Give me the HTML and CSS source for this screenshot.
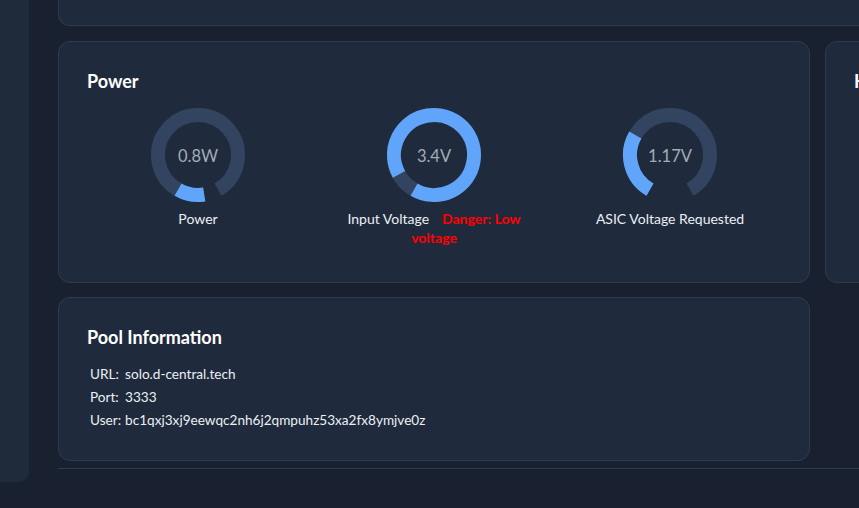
FILE: index.html
```html
<!DOCTYPE html>
<html lang="en">
<head>
<meta charset="utf-8">
<title>AxeOS Dashboard</title>
<link rel="stylesheet" href="styles.css">
</head>
<body>
<div class="app">
  <aside class="sidebar"></aside>
  <main class="main">
    <div class="card top-card"></div>
    <div class="row">
      <section class="card power-card">
        <h2 class="card-title">Power</h2>
        <div class="gauges">
          <div class="gauge">
            <svg class="knob" viewBox="0 0 100 100" width="100" height="100">
              <path class="knob-range" d="M 30 84.64 A 40 40 0 1 1 70 84.64"/>
              <path class="knob-value" d="M 56.26 89.51 A 40 40 0 0 1 30 84.64"/>
              <text class="knob-text" x="50" y="57" text-anchor="middle">0.8W</text>
            </svg>
            <div class="gauge-label">Power</div>
          </div>
          <div class="gauge">
            <svg class="knob" viewBox="0 0 100 100" width="100" height="100">
              <path class="knob-range" d="M 30 84.64 A 40 40 0 1 1 70 84.64"/>
              <path class="knob-value" d="M 15.01 69.39 A 40 40 0 1 1 30 84.64"/>
              <text class="knob-text" x="50" y="57" text-anchor="middle">3.4V</text>
            </svg>
            <div class="gauge-label">Input Voltage<span class="danger">Danger: Low voltage</span></div>
          </div>
          <div class="gauge">
            <svg class="knob" viewBox="0 0 100 100" width="100" height="100">
              <path class="knob-range" d="M 30 84.64 A 40 40 0 1 1 70 84.64"/>
              <path class="knob-value" d="M 30 84.64 A 40 40 0 0 1 15.35 30"/>
              <text class="knob-text" x="50" y="57" text-anchor="middle">1.17V</text>
            </svg>
            <div class="gauge-label">ASIC Voltage Requested</div>
          </div>
        </div>
      </section>
      <section class="card heat-card">
        <h2 class="card-title">Heat</h2>
      </section>
    </div>
    <section class="card pool-card">
      <h2 class="card-title">Pool Information</h2>
      <table class="pool-table">
        <tr><td>URL:</td><td>solo.d-central.tech</td></tr>
        <tr><td>Port:</td><td>3333</td></tr>
        <tr><td>User:</td><td>bc1qxj3xj9eewqc2nh6j2qmpuhz53xa2fx8ymjve0z</td></tr>
      </table>
    </section>
    <div class="divider"></div>
  </main>
</div>
</body>
</html>
```
FILE: styles.css
```css
html, body {
  margin: 0;
  padding: 0;
}

body {
  background: #192130;
  height: 508px;
  overflow: hidden;
  font-family: Lato, "Open Sans", "DejaVu Sans", sans-serif;
  color: #e5e7eb;
}

.app {
  display: flex;
  align-items: flex-start;
}

.sidebar {
  flex-shrink: 0;
  width: 29px;
  height: 482px;
  background: #1f2a3b;
  border-bottom-right-radius: 10px;
}

.main {
  flex-shrink: 0;
  width: 1519px;
  margin-left: 29px;
  display: flex;
  flex-direction: column;
}

.card {
  box-sizing: border-box;
  background: #1f2b3d;
  border: 1px solid #2d3b51;
  border-radius: 12px;
  padding: 28px;
}

.card-title {
  margin: 0;
  font-size: 18px;
  line-height: 22px;
  font-weight: 700;
  color: #ffffff;
}

.top-card {
  height: 26px;
  padding: 0;
  border-top: 0;
  border-radius: 0 0 12px 12px;
}

.row {
  display: grid;
  grid-template-columns: 752px 752px;
  gap: 15px;
  margin-top: 15px;
}

.power-card,
.heat-card {
  height: 242px;
}

.gauges {
  display: grid;
  grid-template-columns: repeat(3, 1fr);
  margin: 13px -7px 0;
}

.gauge {
  padding: 0 14px;
  text-align: center;
}

.knob {
  display: block;
  margin: 0 auto;
}

.knob-range,
.knob-value {
  fill: none;
  stroke-width: 14;
}

.knob-range {
  stroke: #334461;
}

.knob-value {
  stroke: #60a5fa;
}

.knob-text {
  font-family: Lato, "Open Sans", sans-serif;
  font-size: 16.5px;
  fill: #a4abb6;
}

.gauge-label {
  margin-top: 4px;
  font-size: 14px;
  line-height: 19px;
  color: #eceff3;
}

.danger {
  margin-left: 13px;
  color: #ff0000;
  font-weight: 700;
}

.pool-card {
  width: 752px;
  height: 164px;
  margin-top: 14px;
}

.pool-table {
  margin-top: 14px;
  border-spacing: 2px;
  font-size: 13.6px;
  line-height: 19px;
  color: #eceff3;
}

.pool-table td {
  padding: 1px;
}

.divider {
  margin-top: 7px;
  border-top: 1px solid #2d3b51;
}
```
